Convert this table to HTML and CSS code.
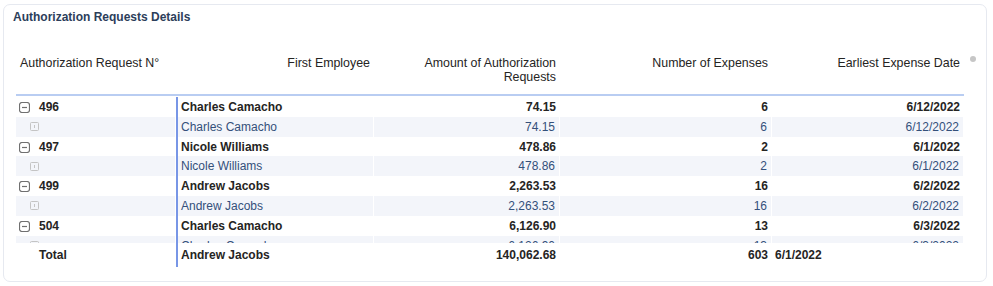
FILE: index.html
```html
<!DOCTYPE html>
<html>
<head>
<meta charset="utf-8">
<link rel="stylesheet" href="styles.css">
</head>
<body>
<div class="card">
  <div class="title">Authorization Requests Details</div>
  <div class="scroll-dot"></div>
  <div class="matrix">
    <div class="row head">
      <div class="cell left">Authorization Request N°</div>
      <div class="cell">First Employee</div>
      <div class="cell">Amount of Authorization Requests</div>
      <div class="cell">Number of Expenses</div>
      <div class="cell">Earliest Expense Date</div>
    </div>
    <div class="body">
      <div class="row group">
        <div class="cell left"><svg class="collapse" viewBox="0 0 11 11"><rect x="0.5" y="0.5" width="10" height="10" rx="2.5"/><line x1="3" y1="5.5" x2="8" y2="5.5"/></svg>496</div>
        <div class="cell name">Charles Camacho</div>
        <div class="cell">74.15</div>
        <div class="cell">6</div>
        <div class="cell">6/12/2022</div>
      </div>
      <div class="row sub">
        <div class="cell left"><svg class="expand" viewBox="0 0 9 9"><rect x="0.5" y="0.5" width="8" height="8" rx="1"/><line x1="4.5" y1="3" x2="4.5" y2="6"/></svg></div>
        <div class="cell name">Charles Camacho</div>
        <div class="cell">74.15</div>
        <div class="cell">6</div>
        <div class="cell">6/12/2022</div>
      </div>
      <div class="row group">
        <div class="cell left"><svg class="collapse" viewBox="0 0 11 11"><rect x="0.5" y="0.5" width="10" height="10" rx="2.5"/><line x1="3" y1="5.5" x2="8" y2="5.5"/></svg>497</div>
        <div class="cell name">Nicole Williams</div>
        <div class="cell">478.86</div>
        <div class="cell">2</div>
        <div class="cell">6/1/2022</div>
      </div>
      <div class="row sub">
        <div class="cell left"><svg class="expand" viewBox="0 0 9 9"><rect x="0.5" y="0.5" width="8" height="8" rx="1"/><line x1="4.5" y1="3" x2="4.5" y2="6"/></svg></div>
        <div class="cell name">Nicole Williams</div>
        <div class="cell">478.86</div>
        <div class="cell">2</div>
        <div class="cell">6/1/2022</div>
      </div>
      <div class="row group">
        <div class="cell left"><svg class="collapse" viewBox="0 0 11 11"><rect x="0.5" y="0.5" width="10" height="10" rx="2.5"/><line x1="3" y1="5.5" x2="8" y2="5.5"/></svg>499</div>
        <div class="cell name">Andrew Jacobs</div>
        <div class="cell">2,263.53</div>
        <div class="cell">16</div>
        <div class="cell">6/2/2022</div>
      </div>
      <div class="row sub">
        <div class="cell left"><svg class="expand" viewBox="0 0 9 9"><rect x="0.5" y="0.5" width="8" height="8" rx="1"/><line x1="4.5" y1="3" x2="4.5" y2="6"/></svg></div>
        <div class="cell name">Andrew Jacobs</div>
        <div class="cell">2,263.53</div>
        <div class="cell">16</div>
        <div class="cell">6/2/2022</div>
      </div>
      <div class="row group">
        <div class="cell left"><svg class="collapse" viewBox="0 0 11 11"><rect x="0.5" y="0.5" width="10" height="10" rx="2.5"/><line x1="3" y1="5.5" x2="8" y2="5.5"/></svg>504</div>
        <div class="cell name">Charles Camacho</div>
        <div class="cell">6,126.90</div>
        <div class="cell">13</div>
        <div class="cell">6/3/2022</div>
      </div>
      <div class="row sub">
        <div class="cell left"><svg class="expand" viewBox="0 0 9 9"><rect x="0.5" y="0.5" width="8" height="8" rx="1"/><line x1="4.5" y1="3" x2="4.5" y2="6"/></svg></div>
        <div class="cell name">Charles Camacho</div>
        <div class="cell">6,126.90</div>
        <div class="cell">13</div>
        <div class="cell">6/3/2022</div>
      </div>
    </div>
    <div class="row total">
      <div class="cell left indent">Total</div>
      <div class="cell name">Andrew Jacobs</div>
      <div class="cell">140,062.68</div>
      <div class="cell">603</div>
      <div class="cell date-left">6/1/2022</div>
    </div>
  </div>
</div>
</body>
</html>
```
FILE: styles.css
```css
html, body {
  margin: 0;
  padding: 0;
  background: #ffffff;
}
body {
  width: 993px;
  height: 286px;
  overflow: hidden;
  font-family: "Liberation Sans", Arial, sans-serif;
}
.card {
  position: relative;
  box-sizing: border-box;
  margin: 4px 0 0 3px;
  width: 984px;
  height: 278px;
  border: 1px solid #e6e9f0;
  border-radius: 7px;
  background: #fff;
  padding: 4px 0 0 9px;
}
.title {
  font-size: 12px;
  font-weight: bold;
  line-height: 16px;
  color: #2c3e5a;
}
.scroll-dot {
  position: absolute;
  left: 966px;
  top: 51px;
  width: 6px;
  height: 6px;
  border-radius: 50%;
  background: #c6c6c6;
}
.matrix {
  margin: 31px 0 0 3px;
  width: 948px;
  font-size: 12px;
}
.row {
  display: grid;
  grid-template-columns: 160px 198px 186px 212px 192px;
}
.cell {
  padding: 0 4px 0 5px;
  text-align: right;
  white-space: nowrap;
  box-sizing: border-box;
}
.cell.left,
.cell.name {
  text-align: left;
}
.head {
  color: #252423;
  font-size: 12.4px;
  line-height: 14px;
  border-bottom: 2px solid #b9cdf2;
  padding-bottom: 10px;
}
.head .cell {
  white-space: normal;
  padding-left: 4px;
  text-align: right;
}
.head .cell.left {
  text-align: left;
}
.head .cell:nth-child(3) {
  padding-left: 46px;
}
.body {
  box-sizing: border-box;
  height: 147px;
  padding-top: 1px;
  overflow: hidden;
}
.body .row {
  height: 19.8px;
  line-height: 20px;
}
.body .group {
  line-height: 21px;
}
.body .cell:nth-child(2),
.total .cell:nth-child(2) {
  border-left: 2px solid #7896e6;
  padding-left: 3px;
}
.group {
  font-weight: bold;
  color: #252423;
}
.group .cell.left {
  display: flex;
  align-items: center;
  gap: 9px;
  padding-left: 3px;
}
.sub {
  color: #34507a;
}
.sub .cell {
  background: #f3f5fa;
  border-right: 1px solid #fff;
}
.sub .cell.left {
  display: flex;
  align-items: center;
  padding-left: 14px;
}
.collapse {
  width: 11px;
  height: 11px;
  fill: none;
  stroke: #707070;
  stroke-width: 1.2;
}
.expand {
  width: 9px;
  height: 9px;
  fill: none;
  stroke: #c4c4c4;
  stroke-width: 1;
}
.total {
  font-weight: bold;
  color: #252423;
  line-height: 24px;
  height: 22px;
}
.total .indent {
  padding-left: 23px;
}
.total .date-left {
  text-align: left;
  padding-left: 3px;
}
```
